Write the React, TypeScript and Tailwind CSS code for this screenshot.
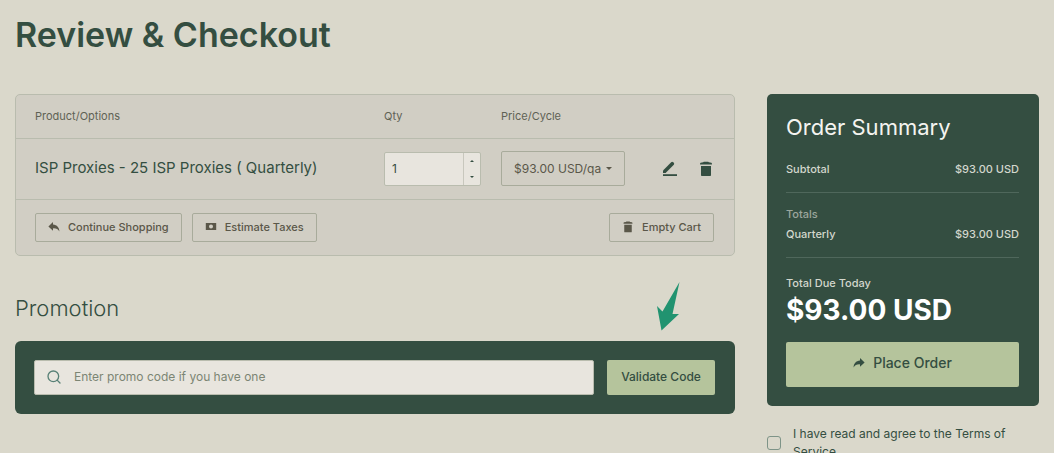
import { useState } from "react";
import type { ReactNode } from "react";
import { Search } from "lucide-react";

const PRICE = "$93.00 USD";

function ReplyIcon({ flip = false }: { flip?: boolean }) {
  return (
    <svg viewBox="0 0 12 12" className={`size-3 shrink-0 ${flip ? "-scale-x-100" : ""}`} fill="currentColor" aria-hidden="true">
      <path d="M5 1 0.4 5.4 5 9.8V7.4C8 7.2 10 8 11.4 10.6 11.4 6.4 9 3.7 5 3.4Z" />
    </svg>
  );
}

function TrashIcon({ className }: { className: string }) {
  return (
    <svg viewBox="0 0 14 16" className={className} fill="currentColor" aria-hidden="true">
      <path d="M4.2 1.2Q4.2 0.8 4.8 0.8H9.2Q9.8 0.8 9.8 1.2L12.4 1.8Q13 2 13 3.6H1Q1 2 1.6 1.8ZM2 5H12V14.2Q12 15 11.2 15H2.8Q2 15 2 14.2Z" />
    </svg>
  );
}

function EditIcon() {
  return (
    <svg viewBox="0 0 16 16" className="size-4" fill="currentColor" aria-hidden="true">
      <path d="M1 9.4 9.2 1.2Q10.2 0.3 11.2 1.2L11.8 1.8Q12.6 2.8 11.8 3.8L3.6 12H1Z" />
      <path d="M1 13.2H15V15H1Z" />
    </svg>
  );
}

function CashIcon() {
  return (
    <svg viewBox="0 0 12 12" className="size-3 shrink-0" fill="currentColor" fillRule="evenodd" aria-hidden="true">
      <path d="M0.8 2H11.2V9H0.8ZM6 3.5A2 2 0 1 0 6 7.5 2 2 0 1 0 6 3.5Z" />
    </svg>
  );
}

function Caret({ up = false }: { up?: boolean }) {
  return (
    <svg viewBox="0 0 6 3" className={`h-[3px] w-[6px] ${up ? "rotate-180" : ""}`} fill="currentColor" aria-hidden="true">
      <path d="M0 0H6L3 3Z" />
    </svg>
  );
}

function StepCaret({ up = false }: { up?: boolean }) {
  return (
    <svg viewBox="0 0 4 2" className={`h-[2px] w-1 ${up ? "rotate-180" : ""}`} fill="currentColor" aria-hidden="true">
      <path d="M0 0H4L2 2Z" />
    </svg>
  );
}

function OutlineButton({ icon, children }: { icon: ReactNode; children: ReactNode }) {
  return (
    <button
      type="button"
      className="flex h-[29px] items-center gap-2 rounded-xs border border-[#a8ab9b] px-3 text-[11px] font-medium text-[#5a5749]"
    >
      {icon}
      {children}
    </button>
  );
}

function SummaryRow({ label }: { label: string }) {
  return (
    <div className="flex justify-between text-[11px] leading-5 font-medium text-[#d3d7cd]">
      <span>{label}</span>
      <span>{PRICE}</span>
    </div>
  );
}

export default function App() {
  const [qty, setQty] = useState(1);
  const [promo, setPromo] = useState("");
  const [agreed, setAgreed] = useState(false);

  return (
    <main className="min-h-screen bg-[#dad8cb] px-[15px] pt-[15px] font-['Inter',sans-serif] text-[#344e41]">
      <h1 className="text-[34px] leading-10 font-semibold">Review &amp; Checkout</h1>

      <div className="mt-[39px] grid grid-cols-[minmax(0,1fr)_272px] items-start gap-8">
        <div>
          {/* Cart */}
          <section className="rounded-[5px] border border-[#b9bcae] bg-[#d1cec4]">
            <table className="w-full table-fixed text-left">
              <thead className="text-[11px] text-[#5f6255]">
                <tr className="h-[43px] border-b border-[#b9bcae]">
                  <th className="pl-[19px] font-normal">Product/Options</th>
                  <th className="w-[117px] font-normal">Qty</th>
                  <th className="w-[124px] font-normal">Price/Cycle</th>
                  <th className="w-[109px]" aria-label="Actions" />
                </tr>
              </thead>
              <tbody>
                <tr className="h-[61px] border-b border-[#b9bcae]">
                  <td className="pl-[19px] text-[15px]">ISP Proxies - 25 ISP Proxies ( Quarterly)</td>
                  <td>
                    <div className="flex h-[34px] w-[97px] overflow-hidden rounded-xs border border-[#b9bcae] bg-[#e8e5de]">
                      <input
                        type="number"
                        min={1}
                        value={qty}
                        onChange={e => setQty(Number(e.target.value))}
                        aria-label="Quantity"
                        className="w-full min-w-0 [appearance:textfield] px-[7px] text-xs outline-none"
                      />
                      <div className="flex w-[17px] shrink-0 flex-col border-l border-[#c8c7bd]">
                        <button type="button" aria-label="Increase" onClick={() => setQty(qty + 1)} className="flex flex-1 items-center justify-center">
                          <StepCaret up />
                        </button>
                        <button type="button" aria-label="Decrease" onClick={() => setQty(Math.max(1, qty - 1))} className="flex flex-1 items-center justify-center">
                          <StepCaret />
                        </button>
                      </div>
                    </div>
                  </td>
                  <td>
                    <div className="relative text-[#5a5749]">
                      <select aria-label="Billing cycle" className="h-[35px] w-full appearance-none rounded-xs border border-[#a8ab9b] pl-3 text-xs">
                        <option>$93.00 USD/qa</option>
                      </select>
                      <span className="pointer-events-none absolute inset-y-0 right-[13px] flex items-center">
                        <Caret />
                      </span>
                    </div>
                  </td>
                  <td>
                    <div className="flex justify-end gap-[21px] pr-[21px]">
                      <button type="button" aria-label="Edit"><EditIcon /></button>
                      <button type="button" aria-label="Remove"><TrashIcon className="h-4 w-[14px]" /></button>
                    </div>
                  </td>
                </tr>
              </tbody>
            </table>
            <div className="flex gap-[10px] py-[13px] pr-5 pl-[19px]">
              <OutlineButton icon={<ReplyIcon />}>Continue Shopping</OutlineButton>
              <OutlineButton icon={<CashIcon />}>Estimate Taxes</OutlineButton>
              <div className="ml-auto">
                <OutlineButton icon={<TrashIcon className="size-3" />}>Empty Cart</OutlineButton>
              </div>
            </div>
          </section>

          {/* Promotion */}
          <section className="relative pt-9">
            <h2 className="text-[22px] leading-8 font-light">Promotion</h2>
            <svg viewBox="0 0 24 50" className="absolute top-[25px] right-[55px] h-[50px] w-6" fill="#219370" aria-hidden="true">
              <path d="M23.5 1 16.5 33H23L5.5 49.5 1 25 6.5 30.5Z" />
            </svg>
            <form
              onSubmit={e => e.preventDefault()}
              className="mt-[17px] flex gap-[13px] rounded-md bg-[#344e41] py-[19px] pr-5 pl-[19px]"
            >
              <label className="flex h-[35px] flex-1 items-center gap-3 rounded-xs border border-[#b9bcae] bg-[#e8e5de] px-[11px]">
                <Search size={16} className="shrink-0 text-[#588076]" />
                <input
                  value={promo}
                  onChange={e => setPromo(e.target.value)}
                  aria-label="Promo code"
                  placeholder="Enter promo code if you have one"
                  className="w-full text-xs outline-none placeholder:text-[#7c8574]"
                />
              </label>
              <button type="submit" className="h-[35px] w-[108px] rounded-xs bg-[#b5c49c] text-xs font-medium">
                Validate Code
              </button>
            </form>
          </section>
        </div>

        <aside>
          {/* Order summary */}
          <section className="rounded-[5px] bg-[#344e41] pt-[17px] pr-5 pb-[19px] pl-[19px]">
            <h2 className="text-[22px] leading-8 text-[#f4f4f0]">Order Summary</h2>
            <div className="mt-4 border-b border-[#4f675b] pb-[13px]">
              <SummaryRow label="Subtotal" />
            </div>
            <div className="border-b border-[#4f675b] pt-[11px] pb-[13px]">
              <p className="text-[11px] leading-5 font-medium text-[#9ca79d]">Totals</p>
              <SummaryRow label="Quarterly" />
            </div>
            <p className="mt-[15px] text-[11px] leading-5 font-medium text-[#d3d7cd]">Total Due Today</p>
            <p className="text-[28px] leading-[34px] font-bold text-white">{PRICE}</p>
            <button
              type="button"
              className="mt-[15px] flex h-[45px] w-full items-center justify-center gap-2 rounded-xs bg-[#b5c49c] pb-1 text-sm font-medium"
            >
              <ReplyIcon flip />
              Place Order
            </button>
          </section>

          <label className="mt-[19px] flex items-center gap-3 text-xs leading-[18px]">
            <input
              type="checkbox"
              checked={agreed}
              onChange={e => setAgreed(e.target.checked)}
              className="size-[14px] shrink-0 appearance-none rounded-[3px] border border-[#7e9488] checked:bg-[#344e41]"
            />
            <span>I have read and agree to the Terms of Service</span>
          </label>
        </aside>
      </div>
    </main>
  );
}
